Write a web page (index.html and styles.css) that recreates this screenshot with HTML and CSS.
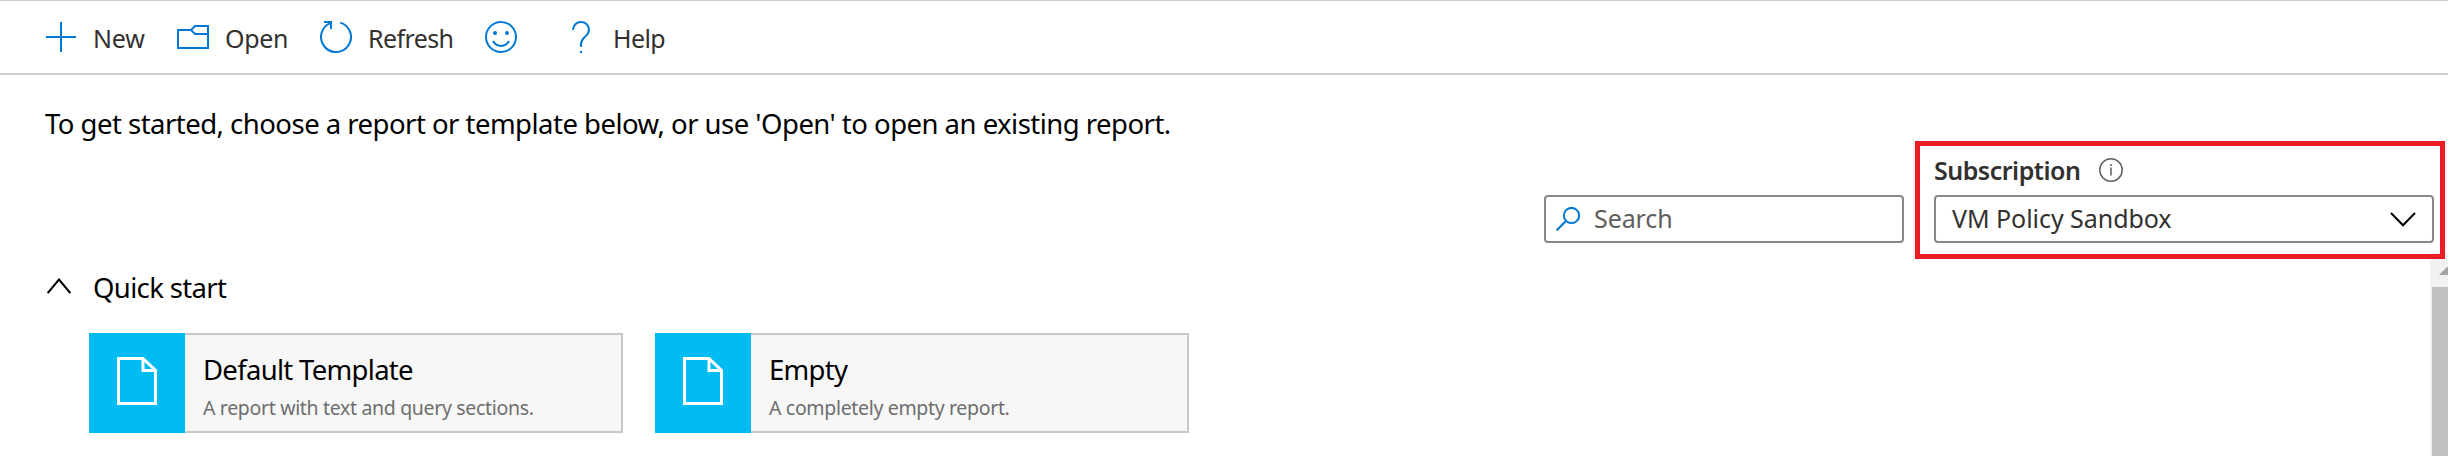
FILE: index.html
```html
<!DOCTYPE html>
<html lang="en">
<head>
<meta charset="utf-8">
<title>Reports</title>
<link rel="stylesheet" href="styles.css">
</head>
<body>
<nav class="toolbar">
  <button class="command new"><svg width="30" height="30" viewBox="0 0 30 30"><path d="M15 0v30M0 15h30"/></svg><span>New</span></button>
  <button class="command open"><svg width="32" height="24" viewBox="0 0 32 24"><path d="M1 5h13l4-4h13v22H1zM14 5l4 4h13"/></svg><span>Open</span></button>
  <button class="command refresh"><svg width="32" height="32" viewBox="0 0 32 32"><path d="M20.2 1.6A15 15 0 1 1 10.4 2.1M4 1h7v7"/></svg><span>Refresh</span></button>
  <button class="command feedback" aria-label="Feedback"><svg width="32" height="32" viewBox="0 0 32 32"><circle cx="16" cy="16" r="15"/><path d="M8 20c3.500 6.500 12.500 6.500 16 0"/><circle class="dot" cx="10" cy="12" r="2"/><circle class="dot" cx="22" cy="12" r="2"/></svg></button>
  <button class="command help"><svg width="18" height="32" viewBox="0 0 18 32"><path d="M1 9c0-4.800 3.400-8 8-8s8 3.200 8 7.700c0 3.800-2.200 5.300-4.500 7.600C10.200 18.600 9 20.300 9 23v3M9 30v2"/></svg><span>Help</span></button>
</nav>
<main>
  <header class="head">
    <p class="intro"><span>To get started, choose a report or template below, or use 'Open' to open an existing report.</span></p>
    <div class="filters">
      <div class="box search"><svg width="24" height="24" viewBox="0 0 24 24"><circle cx="15.500" cy="8.500" r="7.600"/><path d="M10 14L.6 23.400"/></svg><span>Search</span></div>
      <div class="subscription">
        <div class="label"><span>Subscription</span><svg width="24" height="24" viewBox="0 0 24 24"><circle cx="12" cy="12" r="11.200"/><path d="M12 9.500v8M12 6v2"/></svg></div>
        <div class="box select"><span>VM Policy Sandbox</span><svg width="26" height="15" viewBox="0 0 26 15"><path d="M1 1l12 12.300L25 1"/></svg></div>
      </div>
    </div>
  </header>
  <div class="body">
    <section class="gallery">
      <h2 class="group"><svg width="24" height="16" viewBox="0 0 24 16"><path d="M.7 15L12 1.500 23.300 15"/></svg><span>Quick start</span></h2>
      <div class="cards">
        <article class="card">
          <div class="tile"><svg width="40" height="48" viewBox="0 0 40 48"><path d="M1.500 1.500h24.500l12.500 12V46.500h-37zM26 1.500v12h12.500"/></svg></div>
          <div class="info"><h3>Default Template</h3><p>A report with text and query sections.</p></div>
        </article>
        <article class="card">
          <div class="tile"><svg width="40" height="48" viewBox="0 0 40 48"><path d="M1.500 1.500h24.500l12.500 12V46.500h-37zM26 1.500v12h12.500"/></svg></div>
          <div class="info"><h3>Empty</h3><p>A completely empty report.</p></div>
        </article>
      </div>
    </section>
    <div class="scrollbar"><svg width="17" height="8" viewBox="0 0 17 8"><path d="M0 8L8 0h9v8z"/></svg><div class="thumb"></div></div>
  </div>
</main>
</body>
</html>
```
FILE: styles.css
```css
* { box-sizing: border-box; margin: 0; }
body {
  height: 456px;
  overflow: hidden;
  display: flex;
  flex-direction: column;
  background: #fff;
  color: #000;
  font-family: "Noto Sans", "Open Sans", sans-serif;
  font-size: 28px;
  white-space: nowrap;
}
svg { display: block; flex: none; fill: none; stroke: #0078d4; stroke-width: 2; }
.toolbar {
  height: 75px;
  flex: none;
  display: flex;
  align-items: center;
  padding-left: 46px;
  border-top: 1px solid #ccc;
  border-bottom: 2px solid #d0d0d0;
}
.command {
  display: flex;
  align-items: center;
  height: 36px;
  padding: 0;
  border: 0;
  background: none;
  color: #323130;
  font: 25px/36px "Noto Sans", "Open Sans", sans-serif;
}
.command span { position: relative; top: 1px; }
.new { width: 131px; gap: 17px; }
.open { width: 143px; gap: 16px; }
.refresh { width: 165px; gap: 16px; }
.feedback { width: 87px; }
.help { gap: 23px; }
.new span { letter-spacing: -.2px; }
.open span { letter-spacing: -.3px; }
.refresh span { letter-spacing: -.6px; }
.help span { letter-spacing: -.6px; }
main { flex: 1; display: flex; flex-direction: column; }
.head { height: 178px; flex: none; display: flex; flex-direction: column; position: relative; z-index: 1; }
.intro { height: 66px; padding: 29px 0 0 45px; line-height: 40px; font-size: 27.500px; letter-spacing: -.52px; }
.filters { display: flex; justify-content: flex-end; gap: 11px; padding-right: 3px; }
.box {
  height: 48px;
  display: flex;
  align-items: center;
  border: 2px solid #8a8886;
  border-radius: 4px;
  background: #fff;
  font-size: 25px;
  line-height: 36px;
}
.box span { padding-bottom: 2px; }
.search { width: 360px; margin-top: 54px; padding-left: 10px; gap: 14px; color: #605e5c; letter-spacing: -.1px; }
.subscription { width: 530px; height: 118px; border: 5px solid #ed1c24; padding: 7px 6px 0 14px; }
.label { height: 42px; display: flex; align-items: center; gap: 19px; color: #323130; font-size: 25px; font-weight: 600; line-height: 36px; letter-spacing: -.5px; }
.label span { padding-bottom: 8px; }
.label svg { stroke: #605e5c; stroke-width: 1.500; margin-top: -8px; }
.select { justify-content: space-between; padding: 0 16px 0 16px; color: #323130; }
.select span { letter-spacing: -.05px; }
.select svg, .group svg { stroke: #000; }
.body { flex: 1; display: flex; justify-content: space-between; }
.gallery { padding-left: 47px; }
.group { display: flex; align-items: center; gap: 22px; height: 64px; padding-top: 6px; font-size: 27.500px; font-weight: 400; line-height: 40px; letter-spacing: -.65px; }
.group svg { margin-top: -5px; }
.cards { display: flex; gap: 32px; padding: 16px 0 0 42px; }
.card { display: flex; width: 534px; height: 100px; background: #f7f7f7; }
.tile { width: 96px; background: #00bcf2; padding: 24px 0 0 28px; }
.tile svg { stroke: #fff; stroke-width: 3; }
.info { flex: 1; border: 2px solid #c8c8c8; border-left: 0; padding: 15px 0 0 18px; }
.info h3 { font-size: 27.500px; font-weight: 400; line-height: 40px; letter-spacing: -.7px; }
.info p { color: #6e6e6e; font-size: 19.500px; line-height: 30px; padding-top: 3px; letter-spacing: -.33px; }
.scrollbar { width: 18px; background: #f1f1f1; padding: 14px 0 0 2px; display: flex; flex-direction: column; gap: 12px; }
.scrollbar svg { margin-left: 7px; fill: #a3a3a3; stroke: none; }
.thumb { flex: 1; background: #c1c1c1; }
.dot { fill: #0078d4; stroke: none; }
```
